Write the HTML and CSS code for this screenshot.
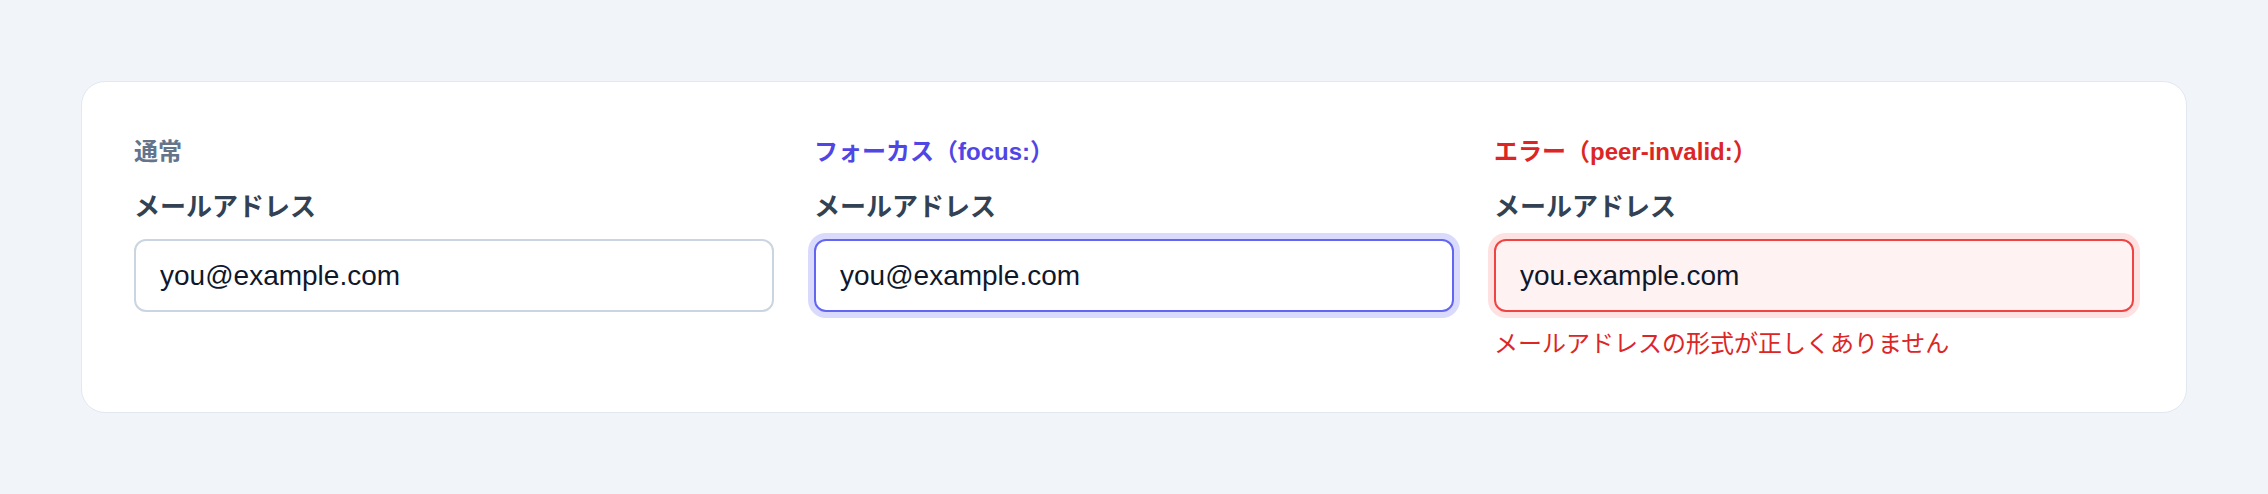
FILE: index.html
```html
<!DOCTYPE html>
<html lang="ja">
<head>
<meta charset="utf-8">
<title>Input states</title>
<link rel="stylesheet" href="styles.css">
</head>
<body>
  <main class="card">
    <section class="col">
      <p class="state state-normal">通常</p>
      <label class="label">メールアドレス</label>
      <input class="field" type="text" value="you@example.com" readonly>
    </section>
    <section class="col">
      <p class="state state-focus">フォーカス（focus:）</p>
      <label class="label">メールアドレス</label>
      <input class="field field-focus" type="text" value="you@example.com" readonly>
    </section>
    <section class="col">
      <p class="state state-error">エラー（peer-invalid:）</p>
      <label class="label">メールアドレス</label>
      <input class="field field-error" type="text" value="you.example.com" readonly>
      <p class="error-msg">メールアドレスの形式が正しくありません</p>
    </section>
  </main>
</body>
</html>
```

FILE: styles.css
```css
* { box-sizing: border-box; }

html, body {
  margin: 0;
  background: #f1f5f9;
}

body {
  padding: 81px;
  font-family: "Liberation Sans", "Noto Sans CJK JP", sans-serif;
}

.card {
  background: #ffffff;
  border: 1px solid #e2e8f0;
  border-radius: 24px;
  padding: 52px;
  display: grid;
  grid-template-columns: repeat(3, 1fr);
  column-gap: 40px;
  align-items: start;
}

.col {
  display: flex;
  flex-direction: column;
}

.state {
  margin: 0 0 19px;
  font-size: 24px;
  line-height: 36px;
  font-weight: 700;
}

.state-normal { color: #64748b; }
.state-focus { color: #4f46e5; }
.state-error { color: #dc2626; }

.label {
  display: block;
  font-size: 26px;
  line-height: 36px;
  font-weight: 700;
  color: #334155;
  margin-bottom: 14px;
}

.field {
  display: block;
  width: 100%;
  height: 73px;
  margin: 0;
  padding: 0 24px;
  border: 2px solid #cbd5e1;
  border-radius: 12px;
  background: #ffffff;
  font-family: "Liberation Sans", "Noto Sans CJK JP", sans-serif;
  font-size: 28px;
  color: #0f172a;
  outline: none;
}

.field-focus {
  border-color: #6366f1;
  box-shadow: 0 0 0 6px #d9dafc;
}

.field-error {
  border-color: #ef4444;
  background: #fef2f2;
  box-shadow: 0 0 0 6px #fee2e2;
}

.error-msg {
  margin: 16px 0 0;
  font-size: 24px;
  line-height: 32px;
  color: #dc2626;
}
```
